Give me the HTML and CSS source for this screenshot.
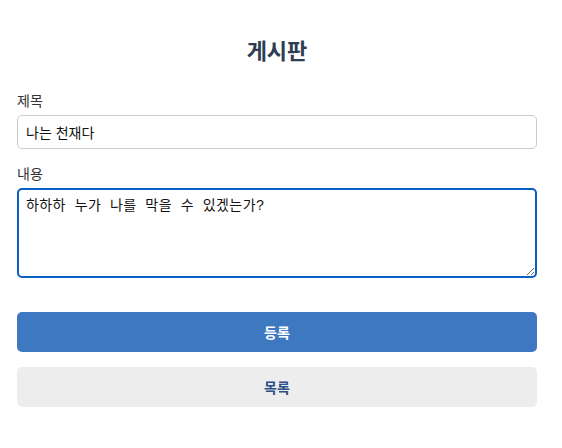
FILE: index.html
```html
<!DOCTYPE html>
<html lang="ko">
<head>
    <meta charset="UTF-8">
    <meta name="viewport" content="width=device-width" />
    <title>게시판</title>
<link rel="stylesheet" href="styles.css">
</head>
<body>
<div id=board>
  <h2 id=title>게시판</h2>
  <label class=label for=subject>제목</label>
  <input id=subject class=field type=text value="나는 천재다">
  <label class=label for=content>내용</label>
  <textarea id=content class=field>하하하 누가 나를 막을 수 있겠는가?</textarea>
  <button class="btn save">등록</button>
  <button class="btn list">목록</button>
</div>
</body>
</html>
```

FILE: styles.css
```css
body {
  margin: 0;
  background: white;
  font-family: "Noto Sans CJK KR", "Noto Sans", sans-serif;
  color: #333;
}
#board {
  width: 520px;
  margin-left: 17px;
  padding-top: 33px;
  display: flex;
  flex-direction: column;
}
#title {
  margin: 0 0 25px;
  text-align: center;
  font-size: 22px;
  line-height: 32px;
  font-weight: bold;
  color: #2c3e50;
}
.label {
  font-size: 14px;
  line-height: 20px;
  margin-bottom: 5px;
  color: #333;
}
.field {
  box-sizing: border-box;
  width: 520px;
  margin: 0 0 14px;
  font-size: 14px;
  color: #111;
  outline: none;
}
#subject {
  height: 34px;
  padding: 0 8px;
  border: 1px solid #ccc;
  border-radius: 5px;
  font-family: "Noto Sans CJK KR", sans-serif;
}
#content {
  height: 90px;
  padding: 7px 7px 5px;
  border: 2px solid #0a5fc4;
  border-radius: 5px;
  font: 14px/19px "Liberation Mono", "Noto Sans CJK KR", monospace;
  letter-spacing: 0.4px;
  resize: vertical;
  margin-bottom: 34px;
}
.btn {
  height: 40px;
  border: none;
  border-radius: 5px;
  font: bold 14px "Noto Sans CJK KR", sans-serif;
  margin-bottom: 15px;
}
.save {
  background: #3e78c0;
  color: white;
}
.list {
  background: #ededed;
  color: #2d4f86;
}
```
